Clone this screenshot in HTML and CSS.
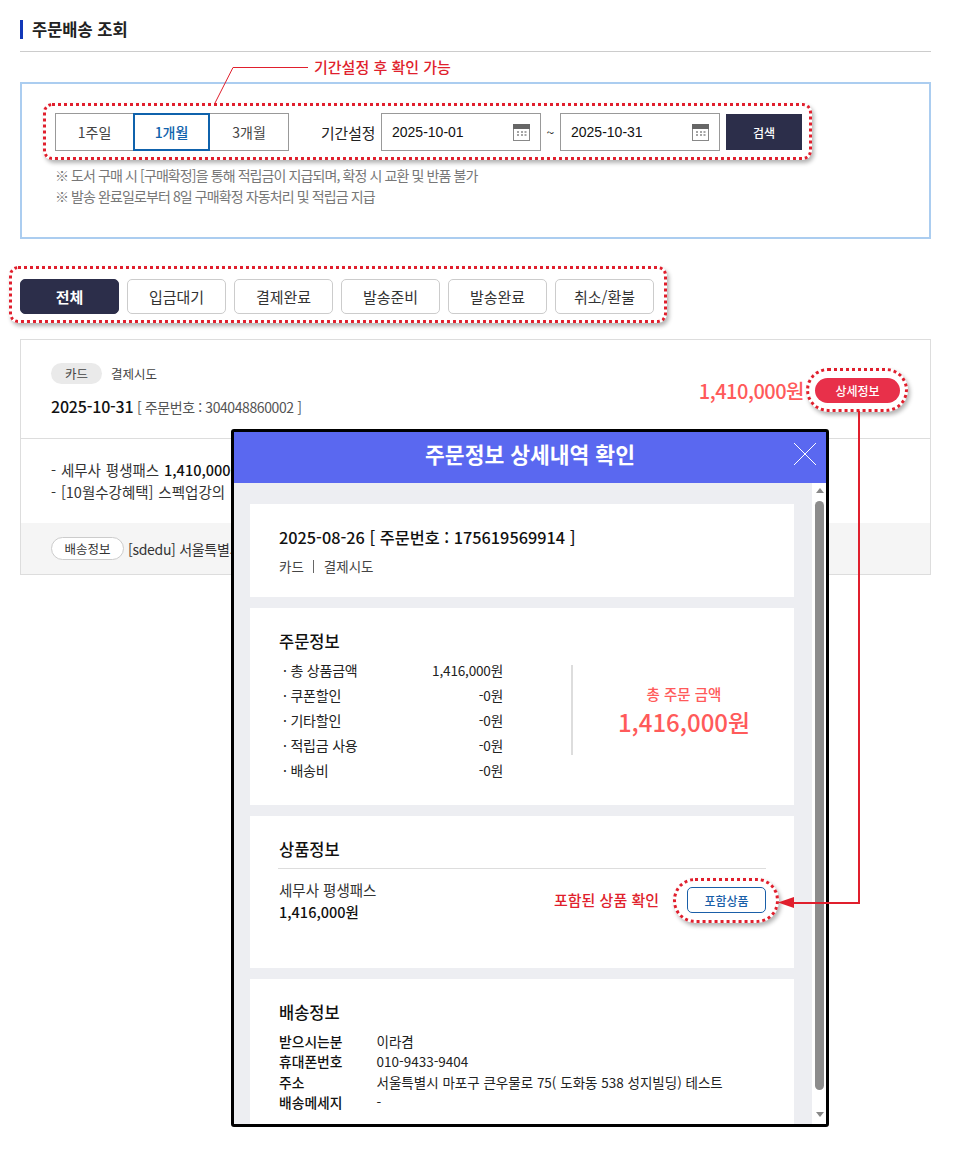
FILE: index.html
```html
<!DOCTYPE html>
<html lang="ko">
<head>
    <meta charset="utf-8">
    <title>주문배송 조회</title>
    <link rel="stylesheet" href="styles.css">
</head>
<body>
<div class="page">
    <h2 class="page-title">주문배송 조회</h2>

    <div class="search-box">
        <div class="search-row">
            <div class="period-tabs">
                <button class="period-tab">1주일</button>
                <button class="period-tab on">1개월</button>
                <button class="period-tab">3개월</button>
            </div>
            <span class="period-label">기간설정</span>
            <div class="date-input">
                <span>2025-10-01</span>
                <svg class="cal" width="17" height="17" viewBox="0 0 17 17"><rect x="0.5" y="0.5" width="16" height="16" fill="#fff" stroke="#888"/><rect width="17" height="5" fill="#666"/><path d="M4 8h2M8 8h2M11.500 8h2M4 11h2M8 11h2M11.500 11h2" stroke="#888" stroke-width="1.500"/></svg>
            </div>
            <span class="tilde">~</span>
            <div class="date-input">
                <span>2025-10-31</span>
                <svg class="cal" width="17" height="17" viewBox="0 0 17 17"><rect x="0.5" y="0.5" width="16" height="16" fill="#fff" stroke="#888"/><rect width="17" height="5" fill="#666"/><path d="M4 8h2M8 8h2M11.500 8h2M4 11h2M8 11h2M11.500 11h2" stroke="#888" stroke-width="1.500"/></svg>
            </div>
            <button class="search-btn">검색</button>
        </div>
        <ul class="notes">
            <li>※ 도서 구매 시 [구매확정]을 통해 적립금이 지급되며, 확정 시 교환 및 반품 불가</li>
            <li>※ 발송 완료일로부터 8일 구매확정 자동처리 및 적립금 지급</li>
        </ul>
    </div>

    <div class="status-tabs">
        <button class="status-tab on">전체</button>
        <button class="status-tab">입금대기</button>
        <button class="status-tab">결제완료</button>
        <button class="status-tab">발송준비</button>
        <button class="status-tab">발송완료</button>
        <button class="status-tab">취소/환불</button>
    </div>

    <div class="order">
        <div class="order-head">
            <div>
                <div class="order-state"><span class="pill">카드</span><span>결제시도</span></div>
                <div class="order-no"><b>2025-10-31</b> [ 주문번호 : 304048860002 ]</div>
            </div>
            <div class="order-price">
                <b>1,410,000원</b>
                <button class="detail-btn">상세정보</button>
            </div>
        </div>
        <div class="order-items">
            <p>- 세무사 평생패스 <b>1,410,000원</b></p>
            <p>- [10월수강혜택] 스펙업강의</p>
        </div>
        <div class="order-ship">
            <span class="ship-pill">배송정보</span>
            <span>[sdedu] 서울특별시 마포구</span>
        </div>
    </div>
</div>

<div class="modal">
    <div class="modal-head">
        주문정보 상세내역 확인
        <svg class="modal-close" width="24" height="24" viewBox="0 0 24 24"><path d="M1 1L23 23M23 1L1 23" stroke="#fff" stroke-width="1"/></svg>
    </div>
    <div class="modal-body">
        <div class="modal-scroll">
            <section class="card card-top">
                <div class="card-date">2025-08-26 [ 주문번호 : 175619569914 ]</div>
                <div class="card-pay">카드<i></i>결제시도</div>
            </section>
            <section class="card card-order">
                <h3>주문정보</h3>
                <div class="sum">
                    <dl class="sum-list">
                        <div><dt>· 총 상품금액</dt><dd>1,416,000원</dd></div>
                        <div><dt>· 쿠폰할인</dt><dd>-0원</dd></div>
                        <div><dt>· 기타할인</dt><dd>-0원</dd></div>
                        <div><dt>· 적립금 사용</dt><dd>-0원</dd></div>
                        <div><dt>· 배송비</dt><dd>-0원</dd></div>
                    </dl>
                    <div class="sum-total">
                        <span>총 주문 금액</span>
                        <b>1,416,000원</b>
                    </div>
                </div>
            </section>
            <section class="card card-goods">
                <h3>상품정보</h3>
                <div class="goods">
                    <div class="goods-info">
                        <p>세무사 평생패스</p>
                        <b>1,416,000원</b>
                    </div>
                    <button class="goods-btn">포함상품</button>
                </div>
            </section>
            <section class="card card-ship">
                <h3>배송정보</h3>
                <dl class="ship-list">
                    <div><dt>받으시는분</dt><dd>이라겸</dd></div>
                    <div><dt>휴대폰번호</dt><dd>010-9433-9404</dd></div>
                    <div><dt>주소</dt><dd>서울특별시 마포구 큰우물로 75( 도화동 538 성지빌딩) 테스트</dd></div>
                    <div><dt>배송메세지</dt><dd>-</dd></div>
                </dl>
            </section>
        </div>
        <div class="scrollbar">
            <span class="arrow up"></span>
            <span class="thumb"></span>
            <span class="arrow down"></span>
        </div>
    </div>
</div>

<!-- 빨간 안내 표시 -->
<div class="mark mark-search"></div>
<div class="mark mark-status"></div>
<div class="mark mark-detail"></div>
<div class="mark mark-goods"></div>
<span class="note-text note-period">기간설정 후 확인 가능</span>
<span class="note-text note-goods">포함된 상품 확인</span>
<svg class="lines" width="958" height="1150" viewBox="0 0 958 1150">
    <path d="M215 103L233 67.500H308" fill="none" stroke="#e01f2d" stroke-width="1"/>
    <path d="M859 411V903H790" fill="none" stroke="#e01f2d" stroke-width="2"/>
    <path d="M778 902.500L794 897V908Z" fill="#e01f2d"/>
</svg>
</body>
</html>
```

FILE: styles.css
```css
* {
    box-sizing: border-box;
}

body {
    margin: 0;
    background-color: #fff;
    color: #222;
    font-family: "Noto Sans CJK KR", "Noto Sans", sans-serif;
    font-size: 13px;
    height: 1150px;
    overflow: hidden;
}

button {
    font-family: inherit;
    cursor: pointer;
}

.page {
    width: 931px;
    padding: 20px 0 0 20px;
}

.page-title {
    margin: 0;
    height: 32px;
    padding-left: 12px;
    border-bottom: 1px solid #ccc;
    font-size: 16.500px;
    font-weight: 700;
    line-height: 19px;
    color: #222;
    position: relative;
}

.page-title:before {
    content: "";
    position: absolute;
    left: 0;
    top: 0;
    width: 3px;
    height: 19px;
    background-color: #1238b8;
}

.search-box {
    margin-top: 30px;
    height: 157px;
    border: 2px solid #abcdf0;
    padding: 29px 0 0 33px;
}

.search-row {
    display: flex;
    align-items: center;
    height: 38px;
}

.period-tabs {
    display: flex;
    width: 234px;
    height: 38px;
    border: 1px solid #999;
}

.period-tab {
    flex: none;
    width: 77px;
    border: 0;
    background: #fff;
    color: #444;
    font-size: 14px;
    padding: 0;
}

.period-tab:last-child {
    width: 78px;
}

.period-tab.on {
    margin: -1px 0;
    border: 2px solid #0f62ac;
    color: #0f62ac;
    font-weight: 500;
}

.period-label {
    margin-left: 32px;
    width: 60px;
    font-size: 14.800px;
    color: #222;
}

.date-input {
    display: flex;
    align-items: center;
    justify-content: space-between;
    width: 160px;
    height: 38px;
    border: 1px solid #999;
    padding: 0 10px;
    font-family: "Liberation Sans", Arial, sans-serif;
    font-size: 14px;
    color: #111;
}

.tilde {
    width: 19px;
    text-align: center;
    font-size: 14px;
}

.search-btn {
    margin-left: 6px;
    width: 76px;
    height: 36px;
    border: 0;
    background-color: #2c2e4a;
    color: #fff;
    font-size: 12px;
    font-weight: 500;
}

.notes {
    list-style: none;
    margin: 14px 0 0;
    padding: 0;
    color: #777;
    font-size: 14px;
    letter-spacing: -0.9px;
    line-height: 21px;
}

.status-tabs {
    display: flex;
    gap: 8px;
    margin-top: 40px;
}

.status-tab {
    width: 99px;
    height: 35px;
    border: 1px solid #ccc;
    border-radius: 5px;
    background: #fff;
    color: #333;
    font-size: 15px;
    padding: 0;
}

.status-tab.on {
    background-color: #2c2e4a;
    border-color: #2c2e4a;
    color: #fff;
    font-weight: 700;
}

.order {
    margin-top: 25px;
    height: 236px;
    border: 1px solid #ddd;
}

.order-head {
    display: flex;
    justify-content: space-between;
    height: 99px;
    padding: 23px 30px 0;
    border-bottom: 1px solid #ddd;
}

.order-state {
    display: flex;
    align-items: center;
    gap: 9px;
    font-size: 12.500px;
    color: #444;
}

.pill {
    width: 51px;
    height: 21px;
    border-radius: 11px;
    background-color: #eaeaea;
    text-align: center;
    line-height: 21px;
    color: #444;
}

.order-no {
    margin-top: 10px;
    font-size: 14px;
    color: #555;
    letter-spacing: -0.4px;
}

.order-no b {
    font-size: 16px;
    font-weight: 500;
    color: #111;
    letter-spacing: -0.2px;
}

.order-price {
    display: flex;
    align-items: center;
    gap: 11px;
    height: 25px;
    margin-top: 15px;
}

.order-price b {
    font-size: 20px;
    font-weight: 500;
    color: #ff5a5a;
    letter-spacing: -0.5px;
}

.detail-btn {
    width: 85px;
    height: 25px;
    border: 0;
    border-radius: 13px;
    background-color: #e8304a;
    color: #fff;
    font-size: 12px;
    font-weight: 500;
    padding: 0;
}

.order-items {
    height: 84px;
    padding: 20px 30px 0;
    font-size: 14.500px;
    word-spacing: 0.8px;
    line-height: 22px;
    color: #333;
}

.order-items p {
    margin: 0;
}

.order-items b {
    font-weight: 500;
    color: #111;
}

.order-ship {
    display: flex;
    align-items: center;
    gap: 4px;
    height: 51px;
    padding: 0 30px;
    background-color: #f5f5f5;
    font-size: 14px;
    letter-spacing: -0.3px;
    color: #333;
}

.ship-pill {
    width: 73px;
    height: 23px;
    border: 1px solid #ccc;
    border-radius: 12px;
    background: #fff;
    text-align: center;
    font-size: 12.500px;
    letter-spacing: 0;
    line-height: 21px;
}

.modal {
    position: absolute;
    left: 231px;
    top: 429px;
    width: 598px;
    height: 698px;
    display: flex;
    flex-direction: column;
    border: 3px solid #000;
    border-radius: 3px;
    background-color: #edeef2;
}

.modal-head {
    position: relative;
    flex: none;
    height: 51px;
    background-color: #5a68f0;
    color: #fff;
    font-size: 21.500px;
    font-weight: 700;
    line-height: 43px;
    text-align: center;
}

.modal-close {
    position: absolute;
    right: 9px;
    top: 10px;
}

.modal-body {
    flex: 1;
    display: flex;
    min-height: 0;
}

.modal-scroll {
    flex: 1;
    min-width: 0;
    overflow: hidden;
    padding: 21px 18px 0 16px;
}

.card {
    background-color: #fff;
    padding: 0 29px;
    margin-bottom: 11px;
    overflow: hidden;
}

.card h3 {
    margin: 0;
    font-size: 16.500px;
    font-weight: 500;
    color: #111;
    line-height: 26px;
}

.card-top {
    height: 93px;
    padding-top: 20px;
}

.card-date {
    font-size: 16.300px;
    font-weight: 500;
    line-height: 26px;
    color: #111;
}

.card-pay {
    margin-top: 6px;
    display: flex;
    align-items: center;
    font-size: 13.500px;
    color: #444;
}

.card-pay i {
    width: 1px;
    height: 13px;
    margin: 0 9.500px;
    background-color: #666;
}

.card-order {
    height: 197px;
    padding-top: 20px;
}

.sum {
    display: flex;
    margin-top: 4px;
}

.sum-list {
    flex: none;
    width: 224px;
    margin: 0;
    line-height: 25px;
    font-size: 14px;
    letter-spacing: -0.2px;
    color: #222;
}

.sum-list div {
    display: flex;
    justify-content: space-between;
}

.sum-list dt {
    padding-left: 4px;
}

.sum-list dd {
    margin: 0;
    font-size: 13.600px;
}

.sum-total {
    flex: none;
    width: 224px;
    height: 90px;
    margin: 7px 0 0 68px;
    padding-top: 18px;
    border-left: 2px solid #ddd;
    display: flex;
    flex-direction: column;
    align-items: center;
    color: #ff5a5a;
}

.sum-total span {
    font-size: 14.500px;
    font-weight: 500;
    line-height: 22px;
}

.sum-total b {
    font-size: 24px;
    font-weight: 500;
    line-height: 34px;
}

.card-goods {
    height: 152px;
    padding: 20px 28px 0;
}

.card-goods h3 {
    height: 33px;
    border-bottom: 1px solid #ddd;
    padding-left: 1px;
}

.goods {
    display: flex;
    justify-content: space-between;
    padding-left: 1px;
}

.goods-info {
    padding-top: 10px;
    font-size: 14.500px;
    line-height: 22px;
}

.goods-info p {
    margin: 0;
    color: #333;
}

.goods-info b {
    font-weight: 500;
    color: #111;
}

.goods-btn {
    width: 79px;
    height: 26px;
    margin-top: 18px;
    border: 1px solid #1a5fa8;
    border-radius: 5px;
    background: #fff;
    color: #1a5fa8;
    font-size: 12px;
    font-weight: 500;
    padding: 0;
}

.card-ship {
    height: 150px;
    padding-top: 20px;
}

.ship-list {
    margin: 6px 0 0;
    font-size: 13.500px;
    line-height: 20.300px;
    color: #222;
}

.ship-list div {
    display: flex;
}

.ship-list dt {
    width: 98px;
    font-size: 13.800px;
    font-weight: 500;
    color: #111;
}

.ship-list dd {
    margin: 0 0 0 -0.5px;
}

.scrollbar {
    flex: none;
    width: 14px;
    background-color: #fff;
    padding: 0 2px 0 3px;
    display: flex;
    flex-direction: column;
    align-items: center;
}

.thumb {
    flex: none;
    width: 9px;
    height: 589px;
    border-radius: 5px;
    background-color: #8c8c8c;
}

.arrow {
    flex: none;
    width: 0;
    height: 5px;
    border-left: 4px solid transparent;
    border-right: 4px solid transparent;
}

.arrow.up {
    margin: 5px 0 8px;
    border-bottom: 5px solid #888;
}

.arrow.down {
    margin-top: 22px;
    border-top: 5px solid #888;
}

/* 안내 표시 */
.mark {
    position: absolute;
    border: 3px dotted #e01f2d;
    box-shadow: 2px 3px 4px rgba(0, 0, 0, 0.3);
}

.mark-search {
    left: 43px;
    top: 103px;
    width: 769px;
    height: 57px;
    border-radius: 9px;
}

.mark-status {
    left: 9px;
    top: 266px;
    width: 658px;
    height: 57px;
    border-radius: 9px;
}

.mark-detail {
    left: 806px;
    top: 368px;
    width: 102px;
    height: 44px;
    border-radius: 22px;
}

.mark-goods {
    left: 673px;
    top: 878px;
    width: 106px;
    height: 45px;
    border-radius: 22px;
}

.note-text {
    position: absolute;
    color: #e01f2d;
    font-size: 15px;
    font-weight: 500;
    line-height: 20px;
}

.note-period {
    left: 314px;
    top: 57px;
}

.note-goods {
    left: 554px;
    top: 890px;
}

.lines {
    position: absolute;
    left: 0;
    top: 0;
    pointer-events: none;
}
```
